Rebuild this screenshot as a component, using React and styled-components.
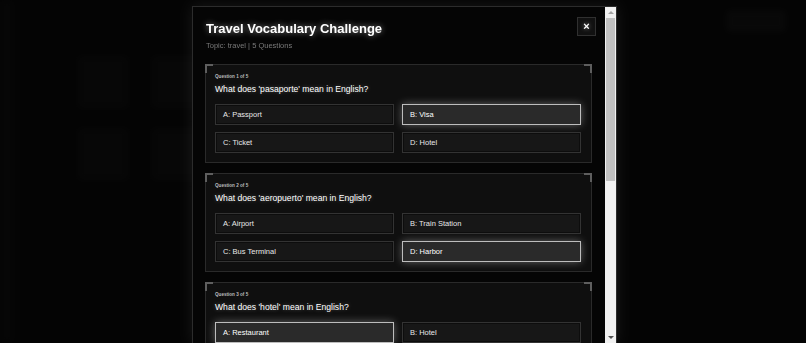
import React from 'react'
import styled, { createGlobalStyle } from 'styled-components'

const questions = [
  {
    word: 'pasaporte',
    options: ['Passport', 'Visa', 'Ticket', 'Hotel'],
    selected: 1,
  },
  {
    word: 'aeropuerto',
    options: ['Airport', 'Train Station', 'Bus Terminal', 'Harbor'],
    selected: 3,
  },
  {
    word: 'hotel',
    options: ['Restaurant', 'Hotel', 'Hostel', 'Inn'],
    selected: 0,
  },
  {
    word: 'equipaje',
    options: ['Luggage', 'Equipment', 'Team', 'Clothes'],
    selected: -1,
  },
  {
    word: 'billete',
    options: ['Bill', 'Ticket', 'Wallet', 'Coin'],
    selected: -1,
  },
]

const letters = ['A', 'B', 'C', 'D']

const GlobalStyle = createGlobalStyle`
  html, body {
    margin: 0;
    padding: 0;
    background: #0a0a0a;
    font-family: "Liberation Sans", Arial, sans-serif;
    overflow: hidden;
  }
  * { box-sizing: border-box; }
`

/* blurred page behind the dialog */
const Page = styled.div`
  display: flex;
  height: 100vh;
  filter: blur(3px);
  opacity: 0.55;
`

const Sidebar = styled.div`
  width: 14px;
  background: #121212;
`

const PageMain = styled.div`
  flex: 1;
  display: flex;
  flex-direction: column;
  padding: 10px 20px;
  gap: 24px;
`

const PageHeader = styled.div`
  display: flex;
  justify-content: flex-end;
`

const GhostButton = styled.div`
  width: 60px;
  height: 22px;
  border-radius: 4px;
  background: #1c1c1c;
`

const GhostGrid = styled.div`
  display: grid;
  grid-template-columns: repeat(2, 50px);
  gap: 20px 24px;
  margin-left: 44px;
`

const GhostCard = styled.div`
  height: 52px;
  background: #151515;
  border: 1px solid #1c1c1c;
`

const Overlay = styled.div`
  position: fixed;
  inset: 0;
  background: rgba(0, 0, 0, 0.55);
  display: flex;
  justify-content: center;
  align-items: flex-start;
  padding-top: 6px;
`

const Modal = styled.div`
  width: 425px;
  height: calc(100vh - 6px);
  margin-left: 3px;
  display: flex;
  background: #050505;
  border: 1px solid #2c2c2c;
  border-bottom: none;
  box-shadow: 0 0 14px rgba(255, 255, 255, 0.08);
`

const Content = styled.div`
  flex: 1;
  min-width: 0;
  overflow: hidden;
`

const ScrollBar = styled.div`
  width: 11px;
  flex-shrink: 0;
  display: flex;
  flex-direction: column;
  background: #f1f1f1;
`

const ScrollArrow = styled.div`
  height: 11px;
  display: flex;
  align-items: center;
  justify-content: center;

  &::before {
    content: '';
    border-left: 3px solid transparent;
    border-right: 3px solid transparent;
    ${p =>
      p.$down
        ? 'border-top: 3px solid #505050;'
        : 'border-bottom: 3px solid #a3a3a3;'}
  }
`

const ScrollThumb = styled.div`
  height: 163px;
  margin: 0 1px;
  background: #c1c1c1;
`

const ScrollSpace = styled.div`
  flex: 1;
`

const Header = styled.div`
  display: flex;
  justify-content: space-between;
  align-items: flex-start;
  padding: 10px 9px 0 13px;
`

const TitleBlock = styled.div`
  display: flex;
  flex-direction: column;
`

const Title = styled.h2`
  margin: 4px 0 0;
  font-size: 13px;
  line-height: 15px;
  font-weight: 700;
  color: #fff;
  text-shadow: 0 0 6px rgba(255, 255, 255, 0.55);
`

const Subtitle = styled.div`
  margin-top: 5px;
  font-size: 7.5px;
  line-height: 9px;
  color: #7a7a7a;
`

const CloseButton = styled.button`
  width: 19px;
  height: 19px;
  padding: 0;
  display: flex;
  align-items: center;
  justify-content: center;
  background: #111;
  border: 1px solid #303030;
  color: #fff;
  font-family: "Liberation Sans", Arial, sans-serif;
  font-size: 11px;
  font-weight: 700;
  line-height: 1;
  text-shadow: 0 0 4px rgba(255, 255, 255, 0.5);
`

const Body = styled.div`
  display: flex;
  flex-direction: column;
  gap: 10px;
  padding: 14px 13px 12px 12px;
`

const Card = styled.div`
  position: relative;
  background: #0f0f0f;
  border: 1px solid #2a2a2a;
  padding: 9px 10px 9px 9px;

  &::before,
  &::after {
    content: '';
    position: absolute;
    top: -1px;
    width: 6px;
    height: 7px;
    border-top: 2px solid #5e5e5e;
  }
  &::before {
    left: -1px;
    border-left: 2px solid #5e5e5e;
  }
  &::after {
    right: -1px;
    border-right: 2px solid #5e5e5e;
  }
`

const Label = styled.div`
  font-size: 4.6px;
  line-height: 6px;
  font-weight: 700;
  color: #bbb;
`

const QuestionText = styled.div`
  margin-top: 4px;
  font-size: 8.6px;
  line-height: 11px;
  color: #fff;
  text-shadow: 0 0 4px rgba(255, 255, 255, 0.3);
`

const Options = styled.div`
  margin-top: 9px;
  display: grid;
  grid-template-columns: 1fr 1fr;
  gap: 7px 8px;
`

const Option = styled.div`
  height: 21px;
  display: flex;
  align-items: center;
  padding: 0 7px;
  font-size: 7.5px;
  color: ${p => (p.$active ? '#fff' : '#e8e8e8')};
  background: ${p => (p.$active ? '#2a2a2a' : '#171717')};
  border: 1px solid ${p => (p.$active ? '#bdbdbd' : '#333')};
  box-shadow: ${p =>
    p.$active ? '0 0 8px rgba(255, 255, 255, 0.35)' : 'inset 0 0 0 1px #0d0d0d'};
`

const Footer = styled.div`
  display: flex;
  justify-content: flex-end;
  padding: 2px 13px 14px 12px;
`

const SubmitButton = styled.button`
  height: 26px;
  padding: 0 14px;
  background: #1a1a1a;
  border: 1px solid #444;
  color: #fff;
  font-family: "Liberation Sans", Arial, sans-serif;
  font-size: 8px;
  font-weight: 700;
`

const QuestionCard = ({ index, word, options, selected }) => (
  <Card>
    <Label>
      Question {index + 1} of {questions.length}
    </Label>
    <QuestionText>What does '{word}' mean in English?</QuestionText>
    <Options>
      {options.map((opt, i) => (
        <Option key={opt} $active={i === selected}>
          {letters[i]}: {opt}
        </Option>
      ))}
    </Options>
  </Card>
)

export default function App() {
  return (
    <>
      <GlobalStyle />
      <Page>
        <Sidebar />
        <PageMain>
          <PageHeader>
            <GhostButton />
          </PageHeader>
          <GhostGrid>
            <GhostCard />
            <GhostCard />
            <GhostCard />
            <GhostCard />
          </GhostGrid>
        </PageMain>
      </Page>
      <Overlay>
        <Modal>
          <Content>
            <Header>
              <TitleBlock>
                <Title>Travel Vocabulary Challenge</Title>
                <Subtitle>Topic: travel | 5 Questions</Subtitle>
              </TitleBlock>
              <CloseButton aria-label="Close">×</CloseButton>
            </Header>
            <Body>
              {questions.map((q, i) => (
                <QuestionCard key={q.word} index={i} {...q} />
              ))}
            </Body>
            <Footer>
              <SubmitButton>Submit Answers</SubmitButton>
            </Footer>
          </Content>
          <ScrollBar>
            <ScrollArrow />
            <ScrollThumb />
            <ScrollSpace />
            <ScrollArrow $down />
          </ScrollBar>
        </Modal>
      </Overlay>
    </>
  )
}
